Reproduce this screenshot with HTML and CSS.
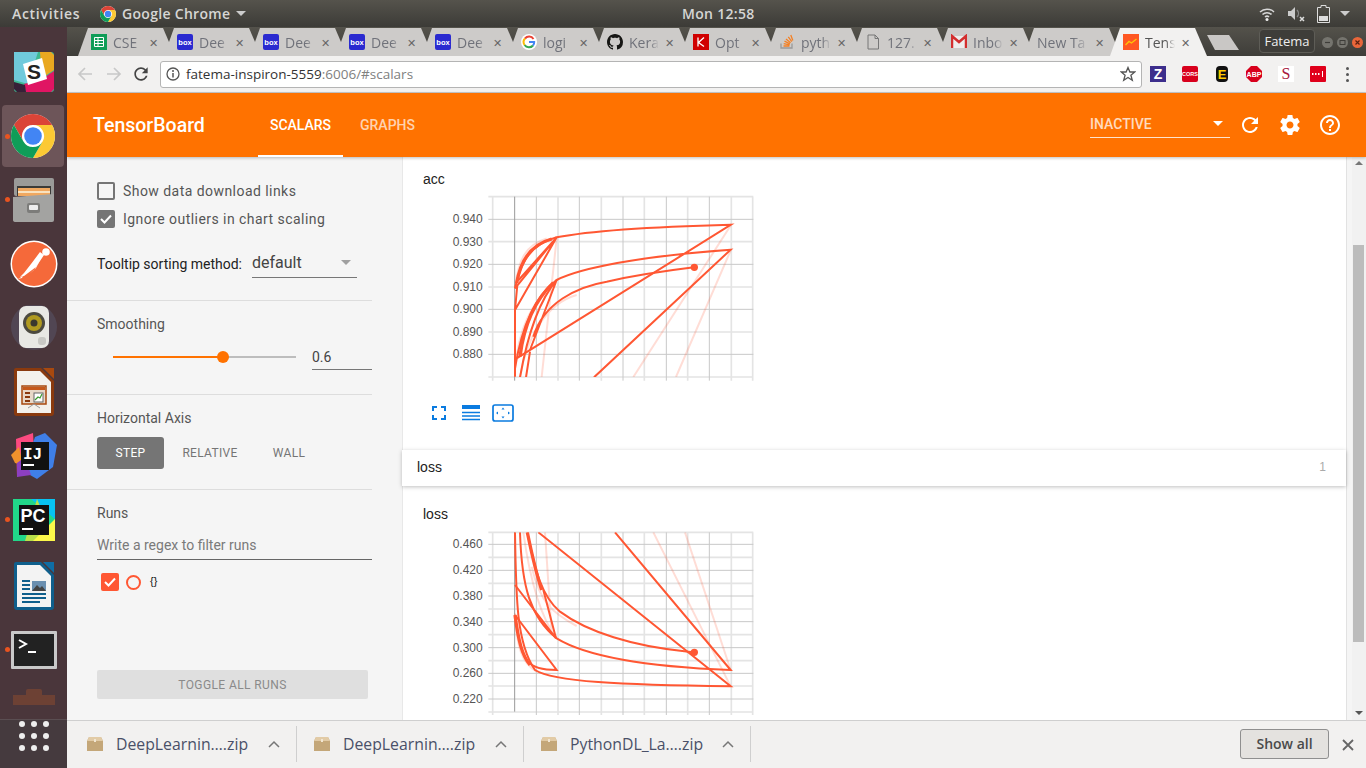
FILE: index.html
```html
<!DOCTYPE html>
<html lang="en">
<head>
    <meta charset="UTF-8">
    <title>TensorBoard</title>
    <link rel="stylesheet" href="styles.css">
</head>
<body>
    <svg class="defs" width="0" height="0">
        <symbol id="chrome" viewBox="4 4 40 40">
            <circle cx="24" cy="24" r="20" fill="#fff"/>
            <path fill="#db4437" d="M6.7 14A20 20 0 0 1 41.3 14H24A10 10 0 0 0 15.3 29Z"/>
            <path fill="#fcc934" d="M41.3 14A20 20 0 0 1 24 44L32.7 29A10 10 0 0 0 24 14Z"/>
            <path fill="#0f9d58" d="M24 44A20 20 0 0 1 6.7 14L15.3 29A10 10 0 0 0 32.7 29Z"/>
            <circle cx="24" cy="24" r="8" fill="#4285f4"/>
        </symbol>
        <symbol id="box" viewBox="0 0 16 16">
            <rect width="16" height="16" rx="2" fill="#2a2ad0"/>
            <text x="8" y="11" text-anchor="middle" font-family="Liberation Sans" font-size="7.5" font-weight="700" fill="#fff">box</text>
        </symbol>
        <symbol id="package" viewBox="0 0 16 14">
            <path fill="#c4a779" d="M2 0H14L16 4V14H0V4Z"/>
            <path fill="#e2cba6" d="M2 0H14L16 4H0Z"/>
            <rect x="7" y="2" width="2" height="3" fill="#f1e6d2"/>
        </symbol>
    </svg>

    <header class="topbar">
        <div class="topbar-left">
            <span class="activities">Activities</span>
            <svg class="top-chrome" width="16" height="16"><use href="#chrome"/></svg>
            <span>Google Chrome</span>
            <i class="caret caret-top"></i>
        </div>
        <div class="clock">Mon 12:58</div>
        <div class="status">
            <svg width="16" height="16" viewBox="0 0 16 16"><path d="M1 6a10 10 0 0 1 14 0M3.5 8.5a6.5 6.5 0 0 1 9 0M6 11a3 3 0 0 1 4 0" fill="none" stroke="#d8d8d8" stroke-width="1.5"/><circle cx="8" cy="13.5" r="1.5" fill="#eee"/></svg>
            <svg width="18" height="16" viewBox="0 0 18 16"><path d="M1 5H4L8 1V14L4 10H1Z" fill="#ccc"/><path d="M10 4a5 5 0 0 1 0 7" fill="none" stroke="#888" stroke-width="1.3"/><path d="M13 11l4 4M17 11l-4 4" stroke="#ddd" stroke-width="1.5"/></svg>
            <svg width="13" height="18" viewBox="0 0 13 18"><path d="M4 .5H9V2.500H12.5V17.500H.5V2.500H4Z" fill="none" stroke="#ddd" stroke-width="1"/><rect x="2" y="11" width="9" height="5" fill="#ddd"/></svg>
            <i class="caret caret-status"></i>
        </div>
    </header>

    <div class="desktop">
        <nav class="dock">
            <div class="dock-item">
                <svg width="40" height="40" viewBox="0 0 40 40">
                    <rect width="40" height="40" rx="3" fill="#3eb991"/>
                    <path d="M0 0H24L14 32 0 28Z" fill="#70cadb"/>
                    <path d="M26 0H37L40 3V18L28 26Z" fill="#e9a820"/>
                    <path d="M40 19V37L37 40H12L10 32 28 27Z" fill="#e01563"/>
                    <path d="M0 30L11 33 12 40H3L0 37Z" fill="#372038"/>
                    <path d="M9 12L28 6 33 27 14 33Z" fill="#fff"/>
                    <text x="20" y="27" text-anchor="middle" font-family="Liberation Sans" font-size="21" font-weight="700" fill="#222">S</text>
                </svg>
            </div>
            <div class="dock-item dock-active">
                <i class="dot"></i>
                <svg width="44" height="44"><use href="#chrome"/></svg>
            </div>
            <div class="dock-item">
                <i class="dot"></i>
                <svg width="42" height="44" viewBox="0 0 42 44">
                    <rect x="1" width="40" height="18" rx="2" fill="#9a9a98"/>
                    <rect x="4" y="8" width="34" height="10" fill="#3a3a38"/>
                    <rect x="5" y="10" width="32" height="8" fill="#f0a860"/>
                    <rect x="5" y="13" width="32" height="2" fill="#f8e2c0"/>
                    <path d="M0 19L41 16V42Q41 44 39 44H3Q0 44 0 42Z" fill="#a3a3a1"/>
                    <rect x="14" y="25" width="13" height="10" rx="2" fill="#7c7c7a"/>
                    <rect x="16" y="27" width="9" height="5" rx="1" fill="#ededed"/>
                </svg>
            </div>
            <div class="dock-item">
                <svg width="48" height="48" viewBox="0 0 48 48">
                    <circle cx="24" cy="24" r="23.500" fill="#fff"/>
                    <circle cx="24" cy="24" r="22" fill="#f5693a"/>
                    <path d="M10 37L14 33 21 24 30 12 34 15 26 27 18 33 14 36Z" fill="#fff"/>
                    <path d="M14 38L24 30 30 20 26 28 19 34Z" fill="#fff"/>
                    <circle cx="36" cy="12" r="3.800" fill="#fff"/>
                    <path d="M8 39L13 36 12 38Z" fill="#fff"/>
                </svg>
            </div>
            <div class="dock-item">
                <svg width="48" height="46" viewBox="0 0 48 46">
                    <circle cx="24" cy="22" r="23" fill="#5a5a70" opacity=".45"/>
                    <rect x="9" y="1" width="30" height="42" rx="7" fill="#e8e8e4"/>
                    <circle cx="24" cy="18" r="11" fill="#4c4a40"/>
                    <circle cx="24" cy="18" r="8" fill="#b09a20"/>
                    <circle cx="24" cy="18" r="3.500" fill="#3a382e"/>
                    <rect x="28" y="32" width="8" height="8" rx="3" fill="#c8c8c4"/>
                </svg>
            </div>
            <div class="dock-item">
                <svg width="40" height="48" viewBox="0 0 40 48">
                    <path d="M2 0H27L40 13V45Q40 48 37 48H3Q0 48 0 45V2Q0 0 2 0Z" fill="#8a3a0e"/>
                    <path d="M3 3H26L37 14V45H3Z" fill="#f3f1ec"/>
                    <path d="M29 0H40V11Z" fill="#a8490f"/>
                    <rect x="8" y="18" width="24" height="18" fill="#e8d8c8" stroke="#a8490f" stroke-width="1.500"/>
                    <rect x="9" y="19" width="22" height="3" fill="#c5581a"/>
                    <path d="M11 25h5M11 29h5M11 33h5" stroke="#8a3a0e" stroke-width="2"/>
                    <rect x="20" y="25" width="9" height="9" fill="#fff" stroke="#666"/>
                    <path d="M21 32l3-3 2 1 2-4" fill="none" stroke="#3a9a30" stroke-width="1.200"/>
                    <path d="M20 36l-6 4M20 36l6 4" stroke="#999"/>
                </svg>
            </div>
            <div class="dock-item">
                <svg width="46" height="46" viewBox="0 0 46 46">
                    <path d="M5 6L22 0 24 30 6 44Z" fill="#fc4a80"/>
                    <path d="M0 22L8 14 12 32 4 30Z" fill="#f0922c"/>
                    <path d="M24 4L34 0 46 12 42 34 26 46 12 38Z" fill="#3f7fe8"/>
                    <path d="M6 30L14 24 20 42 6 44Z" fill="#8d3fc0"/>
                    <rect x="10" y="9" width="28" height="28" fill="#111"/>
                    <text x="12" y="26" font-family="Liberation Mono" font-size="16" font-weight="700" fill="#fff">IJ</text>
                    <rect x="12" y="31" width="11" height="2" fill="#fff"/>
                </svg>
            </div>
            <div class="dock-item">
                <i class="dot"></i>
                <svg width="42" height="42" viewBox="0 0 42 42">
                    <rect width="42" height="42" fill="#21d789"/>
                    <path d="M18 0H42V20Z" fill="#07c3f2"/>
                    <path d="M24 0L30 14 42 42H12Z" fill="#b8e04a"/>
                    <path d="M42 20V42H20Z" fill="#fcf84a"/>
                    <rect x="6" y="6" width="30" height="30" fill="#111"/>
                    <text x="7.500" y="23" font-family="Liberation Sans" font-size="18" font-weight="700" fill="#fff">PC</text>
                    <rect x="9" y="29" width="11" height="2" fill="#fff"/>
                </svg>
            </div>
            <div class="dock-item dock-writer">
                <svg width="40" height="48" viewBox="0 0 40 48">
                    <path d="M2 0H27L40 13V45Q40 48 37 48H3Q0 48 0 45V2Q0 0 2 0Z" fill="#0f5f8c"/>
                    <path d="M3 3H26L37 14V45H3Z" fill="#f3f3f3"/>
                    <path d="M29 0H40V11Z" fill="#0f6ea5"/>
                    <path d="M8 19h8M8 23h8M8 27h8M8 32h24M8 36h24M8 40h18" stroke="#0f5f8c" stroke-width="2"/>
                    <rect x="18" y="19" width="14" height="10" fill="#6a8fb0"/>
                    <path d="M18 29l5-6 3 3 2-2 4 5Z" fill="#444"/>
                </svg>
            </div>
            <div class="dock-item">
                <i class="dot"></i>
                <svg width="46" height="38" viewBox="0 0 46 38">
                    <rect width="46" height="38" rx="1" fill="#c9c9c9"/>
                    <rect x="3" y="3" width="40" height="32" fill="#222"/>
                    <path d="M8 9l7 4-7 4" fill="none" stroke="#fff" stroke-width="2"/>
                    <rect x="17" y="20" width="8" height="2" fill="#fff"/>
                </svg>
            </div>
            <div class="dock-item dock-faded">
                <svg width="42" height="16" viewBox="0 0 42 16">
                    <path d="M0 6H13V2Q13 0 15 0H27Q29 0 29 2V6H42V16H0Z" fill="#8a4a30"/>
                </svg>
            </div>
            <div class="dock-apps">
                <i></i><i></i><i></i><i></i><i></i><i></i><i></i><i></i><i></i>
            </div>
        </nav>

        <div class="browser">
            <div class="tabstrip">
                <div class="tab">
                    <svg width="16" height="16" viewBox="0 0 16 16"><rect width="16" height="16" fill="#0f9d58"/><path d="M3.500 3.500h9v9h-9zM3.500 6.500h9M3.500 9.500h9M7 3.500v9" fill="none" stroke="#fff"/></svg>
                    <span class="tab-title">CSE</span><span class="tab-x">✕</span>
                </div>
                <div class="tab"><svg width="16" height="16"><use href="#box"/></svg><span class="tab-title">Dee</span><span class="tab-x">✕</span></div>
                <div class="tab"><svg width="16" height="16"><use href="#box"/></svg><span class="tab-title">Dee</span><span class="tab-x">✕</span></div>
                <div class="tab"><svg width="16" height="16"><use href="#box"/></svg><span class="tab-title">Dee</span><span class="tab-x">✕</span></div>
                <div class="tab"><svg width="16" height="16"><use href="#box"/></svg><span class="tab-title">Dee</span><span class="tab-x">✕</span></div>
                <div class="tab">
                    <svg width="16" height="16" viewBox="0 0 16 16"><circle cx="8" cy="8" r="8" fill="#fff"/><path d="M12.500 5A5.300 5.300 0 0 0 4 4.500" fill="none" stroke="#ea4335" stroke-width="2"/><path d="M4 4.500A5.300 5.300 0 0 0 3.600 11" fill="none" stroke="#fbbc05" stroke-width="2"/><path d="M3.600 11A5.300 5.300 0 0 0 12 11.500" fill="none" stroke="#34a853" stroke-width="2"/><path d="M8 8H13.200A5.300 5.300 0 0 1 12 11.500" fill="none" stroke="#4285f4" stroke-width="2"/></svg>
                    <span class="tab-title">logi</span><span class="tab-x">✕</span>
                </div>
                <div class="tab">
                    <svg width="16" height="16" viewBox="0 0 16 16"><path fill="#161614" d="M8 0C3.580 0 0 3.580 0 8c0 3.540 2.290 6.530 5.470 7.590.4.070.55-.17.55-.38 0-.19-.01-.82-.01-1.490-2.010.37-2.530-.49-2.690-.94-.09-.23-.48-.94-.82-1.130-.28-.15-.68-.52-.01-.53.63-.01 1.080.58 1.230.82.720 1.210 1.870.87 2.330.66.070-.52.28-.87.510-1.070-1.780-.2-3.640-.89-3.640-3.950 0-.87.310-1.590.820-2.150-.08-.2-.36-1.020.08-2.120 0 0 .67-.21 2.200.82.640-.18 1.320-.27 2-.27s1.360.09 2 .27c1.530-1.040 2.200-.82 2.200-.82.440 1.100.16 1.920.08 2.120.51.560.82 1.270.82 2.150 0 3.070-1.870 3.750-3.650 3.950.29.250.54.730.54 1.480 0 1.070-.01 1.930-.01 2.200 0 .21.150.46.550.38A8.010 8.010 0 0 0 16 8c0-4.420-3.580-8-8-8z"/></svg>
                    <span class="tab-title">Kera</span><span class="tab-x">✕</span>
                </div>
                <div class="tab">
                    <svg width="16" height="16" viewBox="0 0 16 16"><rect width="16" height="16" fill="#d00000"/><path d="M5 3.500v9M11 3.500L5.500 8.500 11 12.500" fill="none" stroke="#fff" stroke-width="1.300"/></svg>
                    <span class="tab-title">Opt</span><span class="tab-x">✕</span>
                </div>
                <div class="tab">
                    <svg width="16" height="16" viewBox="0 0 16 16"><path d="M2 9.500v4.500h11V9.500" fill="none" stroke="#999" stroke-width="1.300"/><path d="M4.500 12h6M4.700 9.700l5.900 1.200M5.500 7.200l5.400 2.600M7 5l4.600 3.800M9.300 2.800l3.500 4.800M11.800 1l2 5.500" stroke="#f48024" stroke-width="1.300"/></svg>
                    <span class="tab-title">pyth</span><span class="tab-x">✕</span>
                </div>
                <div class="tab">
                    <svg width="16" height="16" viewBox="0 0 16 16"><path d="M3 1H10L13.500 4.500V15H3ZM10 1V4.500H13.500" fill="none" stroke="#777"/></svg>
                    <span class="tab-title">127.</span><span class="tab-x">✕</span>
                </div>
                <div class="tab">
                    <svg width="16" height="16" viewBox="0 0 16 16"><rect x="1" y="2" width="14" height="12" fill="#eee"/><path d="M1 14V2L8 8 15 2V14" fill="none" stroke="#d32f2f" stroke-width="2.500"/></svg>
                    <span class="tab-title">Inbo</span><span class="tab-x">✕</span>
                </div>
                <div class="tab"><span class="tab-title tab-title-wide">New Ta</span><span class="tab-x">✕</span></div>
                <div class="tab tab-active">
                    <svg width="16" height="16" viewBox="0 0 16 16"><rect width="16" height="16" fill="#ff5722"/><path d="M2.500 11L6 7.500 8.500 9 13.500 5" fill="none" stroke="#ffc107" stroke-width="1.400"/></svg>
                    <span class="tab-title">Tens</span><span class="tab-x">✕</span>
                </div>
                <div class="new-tab"></div>
                <div class="profile">Fatema</div>
                <div class="win-buttons">
                    <i class="win-btn"><svg width="11" height="11" viewBox="0 0 11 11"><path d="M3 5.500H8" stroke="#3e3d39" stroke-width="1.200"/></svg></i>
                    <i class="win-btn"><svg width="11" height="11" viewBox="0 0 11 11"><rect x="3" y="3.500" width="5" height="4" fill="none" stroke="#3e3d39"/></svg></i>
                    <i class="win-btn win-close"><svg width="11" height="11" viewBox="0 0 11 11"><path d="M3.500 3.500L7.500 7.500M7.500 3.500L3.500 7.500" stroke="#5a2010" stroke-width="1.200"/></svg></i>
                </div>
            </div>

            <div class="toolbar">
                <svg class="nav-icon" width="16" height="16" viewBox="0 0 16 16"><path d="M15 8H2M8 2L2 8 8 14" fill="none" stroke="#c8c8c8" stroke-width="1.700"/></svg>
                <svg class="nav-icon nav-forward" width="16" height="16" viewBox="0 0 16 16"><path d="M1 8H14M8 2L14 8 8 14" fill="none" stroke="#c8c8c8" stroke-width="1.700"/></svg>
                <svg class="nav-icon" width="20" height="20" viewBox="0 0 24 24"><path fill="#444" d="M17.650 6.350C16.200 4.900 14.210 4 12 4c-4.420 0-7.990 3.580-7.990 8s3.570 8 7.990 8c3.730 0 6.840-2.550 7.730-6h-2.080c-.82 2.330-3.040 4-5.650 4-3.310 0-6-2.690-6-6s2.690-6 6-6c1.660 0 3.140.69 4.220 1.780L13 11h7V4l-2.350 2.350z"/></svg>
                <div class="omnibox">
                    <svg width="14" height="14" viewBox="0 0 14 14"><circle cx="7" cy="7" r="6" fill="none" stroke="#555" stroke-width="1.300"/><path d="M7 6v4.500" stroke="#555" stroke-width="1.500"/><circle cx="7" cy="3.900" r="1" fill="#555"/></svg>
                    <span class="url"><b>fatema-inspiron-5559</b>:6006/#scalars</span>
                    <svg class="star" width="16" height="16" viewBox="0 0 16 16"><path d="M8 1.500L9.900 6H14.800L10.900 9.200 12.300 14.300 8 11.500 3.700 14.300 5.100 9.200 1.200 6H6.100Z" fill="none" stroke="#555" stroke-width="1.300"/></svg>
                </div>
                <div class="extensions">
                    <svg width="16" height="16" viewBox="0 0 16 16"><rect width="16" height="16" fill="#3d2e8c"/><text x="8" y="13" text-anchor="middle" font-family="Liberation Sans" font-size="14" font-weight="700" fill="#fff">Z</text></svg>
                    <svg width="16" height="16" viewBox="0 0 16 16"><rect width="16" height="16" rx="2" fill="#d8001c"/><text x="8" y="10" text-anchor="middle" font-family="Liberation Sans" font-size="5.500" font-weight="700" fill="#fff">CORS</text></svg>
                    <svg width="16" height="16" viewBox="0 0 16 16"><rect x="2" y="0" width="12" height="16" rx="4" fill="#111"/><text x="8" y="13" text-anchor="middle" font-family="Liberation Sans" font-size="13" font-weight="700" fill="#fc0">E</text></svg>
                    <svg width="16" height="16" viewBox="0 0 16 16"><path d="M5 0H11L16 5V11L11 16H5L0 11V5Z" fill="#d8001c"/><text x="8" y="10.500" text-anchor="middle" font-family="Liberation Sans" font-size="7" font-weight="700" fill="#fff">ABP</text></svg>
                    <svg width="16" height="16" viewBox="0 0 16 16"><rect width="16" height="16" fill="#fff"/><text x="8" y="13" text-anchor="middle" font-family="Liberation Serif" font-size="16" fill="#a8183c">S</text></svg>
                    <svg width="16" height="16" viewBox="0 0 16 16"><rect width="16" height="16" rx="1" fill="#e0001b"/><path d="M2 8h1.500M5 8h1.500M8 8h1.500" stroke="#fff" stroke-width="2"/><path d="M12.500 5v6" stroke="#fff"/></svg>
                </div>
                <div class="kebab"><i></i><i></i><i></i></div>
            </div>

            <header class="tb-header">
                <div class="tb-logo">TensorBoard</div>
                <div class="tb-tab tb-tab-on">SCALARS</div>
                <div class="tb-tab">GRAPHS</div>
                <div class="tb-run">INACTIVE<i class="caret caret-white"></i></div>
                <svg class="tb-icon tb-refresh" width="24" height="24" viewBox="0 0 24 24"><path d="M17.650 6.350C16.200 4.900 14.210 4 12 4c-4.420 0-7.990 3.580-7.990 8s3.570 8 7.990 8c3.730 0 6.840-2.550 7.730-6h-2.080c-.82 2.330-3.040 4-5.650 4-3.310 0-6-2.690-6-6s2.690-6 6-6c1.660 0 3.140.69 4.220 1.780L13 11h7V4l-2.350 2.350z"/></svg>
                <svg class="tb-icon" width="24" height="24" viewBox="0 0 24 24"><path d="M19.430 12.980c.04-.32.07-.64.07-.98s-.03-.66-.07-.98l2.110-1.650c.19-.15.24-.42.12-.64l-2-3.460c-.12-.22-.39-.3-.61-.22l-2.490 1c-.52-.4-1.080-.73-1.690-.98l-.38-2.650C14.460 2.180 14.250 2 14 2h-4c-.25 0-.46.18-.49.420l-.38 2.650c-.61.25-1.170.59-1.690.98l-2.490-1c-.23-.09-.49 0-.61.22l-2 3.460c-.13.22-.07.49.12.64l2.110 1.650c-.04.32-.07.65-.07.98s.03.66.07.98l-2.110 1.650c-.19.15-.24.42-.12.64l2 3.460c.12.22.39.3.61.22l2.490-1c.52.4 1.080.73 1.690.98l.38 2.650c.03.24.24.42.49.42h4c.25 0 .46-.18.49-.42l.38-2.650c.61-.25 1.170-.59 1.690-.98l2.490 1c.23.09.49 0 .61-.22l2-3.460c.12-.22.07-.49-.12-.64l-2.110-1.650zM12 15.500c-1.930 0-3.500-1.570-3.500-3.500s1.570-3.500 3.500-3.500 3.500 1.570 3.500 3.500-1.570 3.500-3.500 3.500z"/></svg>
                <svg class="tb-icon" width="24" height="24" viewBox="0 0 24 24"><path d="M11 18h2v-2h-2v2zm1-16C6.480 2 2 6.480 2 12s4.480 10 10 10 10-4.480 10-10S17.520 2 12 2zm0 18c-4.410 0-8-3.590-8-8s3.590-8 8-8 8 3.590 8 8-3.590 8-8 8zm0-14c-2.210 0-4 1.790-4 4h2c0-1.100.9-2 2-2s2 .9 2 2c0 2-3 1.750-3 5h2c0-2.250 3-2.500 3-5 0-2.210-1.790-4-4-4z"/></svg>
            </header>

            <div class="page">
                <aside class="sidebar">
                    <section class="side-block side-options">
                        <label class="check"><i class="box"></i>Show data download links</label>
                        <label class="check"><i class="box box-on"><svg width="14" height="14" viewBox="0 0 14 14"><path d="M2 7l3.500 3.500L12 3.500" fill="none" stroke="#fff" stroke-width="2"/></svg></i>Ignore outliers in chart scaling</label>
                        <div class="tooltip-row">
                            <span>Tooltip sorting method:</span>
                            <div class="select">default<i class="caret caret-grey"></i></div>
                        </div>
                    </section>
                    <section class="side-block side-smoothing">
                        <div class="side-title">Smoothing</div>
                        <div class="slider-row">
                            <div class="slider"><div class="slider-fill"></div><div class="slider-knob"></div></div>
                            <div class="slider-value">0.6</div>
                        </div>
                    </section>
                    <section class="side-block side-axis">
                        <div class="side-title">Horizontal Axis</div>
                        <div class="axis-buttons">
                            <div class="axis-btn axis-btn-on">STEP</div>
                            <div class="axis-btn axis-btn-rel">RELATIVE</div>
                            <div class="axis-btn axis-btn-wall">WALL</div>
                        </div>
                    </section>
                    <section class="side-runs">
                        <div class="side-title">Runs</div>
                        <div class="run-filter">Write a regex to filter runs</div>
                        <div class="run-row">
                            <i class="box box-run"><svg width="14" height="14" viewBox="0 0 14 14"><path d="M2 7l3.500 3.500L12 3.500" fill="none" stroke="#fff" stroke-width="2"/></svg></i>
                            <i class="run-dot"></i>
                            <span class="run-name">{}</span>
                        </div>
                        <div class="toggle-runs">TOGGLE ALL RUNS</div>
                    </section>
                </aside>

                <main class="panel">
                    <section class="chart-card chart-card-acc">
                        <div class="chart-title">acc</div>
                        <svg class="chart" width="310" height="190" viewBox="90 75 930 570">
                            <defs><clipPath id="clip-acc"><rect x="205" y="80" width="800" height="541"/></clipPath></defs>
                            <path class="grid-minor" d="M218 80V632M414 80V632M544 80V632M673 80V632M803 80V632M934 80V632M998 80V632M205 80H1000M205 215H1000M205 351H1000M205 486H1000M205 621H1000"/>
                            <path class="grid-major" d="M349 80V632M478 80V632M609 80V632M739 80V632M868 80V632M205 148H1000M205 283H1000M205 418H1000M205 553H1000"/>
                            <path class="grid-axis" d="M284 80V632"/>
                            <g class="axis-label">
                                <text x="188" y="160">0.940</text><text x="188" y="227">0.930</text><text x="188" y="295">0.920</text><text x="188" y="363">0.910</text><text x="188" y="430">0.900</text><text x="188" y="498">0.890</text><text x="188" y="565">0.880</text>
                            </g>
                            <g clip-path="url(#clip-acc)">
                                <path class="raw" d="M365 621L410 205M640 621L933 165M768 621L933 239M285 355C295 270 315 225 380 205M285 600C295 480 330 400 410 330M300 621C320 500 380 400 470 375"/>
                                <path class="smooth" d="M285 355C300 285 325 225 410 202C500 184 700 170 933 164L285 568V595C300 500 335 385 410 330C480 295 650 260 932 239L522 622"/>
                                <path class="smooth" d="M300 622C318 520 350 400 410 330L330 540M340 500C370 400 470 350 560 335C650 315 740 302 822 292"/>
                                <path class="smooth" d="M285 355L410 202L285 420L292 345M285 420V620M296 330L410 202M318 622L330 545"/>
                                <path class="smooth smooth-thick" d="M290 340C300 280 325 225 395 207M300 560C310 480 335 400 400 338"/>
                            </g>
                            <circle class="run-marker" cx="823" cy="292" r="11"/>
                        </svg>
                        <div class="chart-tools">
                            <svg width="14" height="14" viewBox="0 0 14 14"><path d="M1 5V1H5M9 1H13V5M13 9V13H9M5 13H1V9" fill="none" stroke="#0a7be0" stroke-width="2"/></svg>
                            <svg width="18" height="16" viewBox="0 0 18 16"><path d="M0 2H18" stroke="#0a7be0" stroke-width="4"/><path d="M0 7.500H18M0 11H18M0 14.500H18" stroke="#0a7be0" stroke-width="1.700"/></svg>
                            <svg width="22" height="18" viewBox="0 0 22 18"><rect x="1" y="1" width="20" height="16" rx="2" fill="none" stroke="#0a7be0" stroke-width="1.700"/><path d="M11 3.500l-1.500 2h3ZM11 14.500l-1.500-2h3ZM4 9l2-1.500v3ZM18 9l-2-1.500v3Z" fill="#0a7be0"/></svg>
                        </div>
                    </section>

                    <div class="section-head"><span>loss</span><span class="section-count">1</span></div>

                    <section class="chart-card">
                        <div class="chart-title">loss</div>
                        <svg class="chart" width="310" height="185" viewBox="90 90 930 555">
                            <defs><clipPath id="clip-loss"><rect x="205" y="97" width="800" height="538"/></clipPath></defs>
                            <path class="grid-minor" d="M218 97V645M414 97V645M544 97V645M673 97V645M803 97V645M934 97V645M998 97V645M205 97H1000M205 172H1000M205 250H1000M205 327H1000M205 404H1000M205 482H1000M205 558H1000M205 636H1000"/>
                            <path class="grid-major" d="M349 97V645M478 97V645M609 97V645M739 97V645M868 97V645M205 133H1000M205 211H1000M205 288H1000M205 365H1000M205 443H1000M205 520H1000M205 597H1000"/>
                            <path class="grid-axis" d="M284 97V635"/>
                            <g class="axis-label">
                                <text x="188" y="145">0.460</text><text x="188" y="223">0.420</text><text x="188" y="301">0.380</text><text x="188" y="378">0.340</text><text x="188" y="455">0.300</text><text x="188" y="532">0.260</text><text x="188" y="610">0.220</text>
                            </g>
                            <g clip-path="url(#clip-loss)">
                                <path class="raw" d="M932 559L700 97M932 510L795 97M395 400L375 97M285 340C290 440 305 490 350 515M310 97C330 240 360 350 410 415M335 200C360 310 400 340 470 378"/>
                                <path class="smooth" d="M322 97C345 210 365 290 420 335C500 395 640 440 805 455L822 457"/>
                                <path class="smooth" d="M300 97C305 260 330 350 410 415C500 470 680 500 932 510L585 97"/>
                                <path class="smooth" d="M285 97C288 300 290 430 345 510C400 545 600 555 932 559L355 97"/>
                                <path class="smooth" d="M408 415L370 270M408 415L285 255M285 345L410 510C370 510 340 505 325 485"/>
                                <path class="smooth smooth-thick" d="M285 345C295 420 305 465 330 495M322 97C335 160 345 210 365 270"/>
                            </g>
                            <circle class="run-marker" cx="823" cy="457" r="11"/>
                        </svg>
                    </section>
                </main>

                <div class="gutter"></div>
                <div class="scrollbar">
                    <i class="arrow-up"></i>
                    <div class="thumb"></div>
                    <i class="arrow-down"></i>
                </div>
            </div>

            <footer class="downloads">
                <div class="dl-item">
                    <svg width="16" height="14"><use href="#package"/></svg>
                    <span class="dl-name">DeepLearnin….zip</span>
                    <svg class="dl-up" width="12" height="8" viewBox="0 0 12 8"><path d="M1 7l5-5 5 5" fill="none" stroke="#777" stroke-width="1.500"/></svg>
                </div>
                <div class="dl-item">
                    <svg width="16" height="14"><use href="#package"/></svg>
                    <span class="dl-name">DeepLearnin….zip</span>
                    <svg class="dl-up" width="12" height="8" viewBox="0 0 12 8"><path d="M1 7l5-5 5 5" fill="none" stroke="#777" stroke-width="1.500"/></svg>
                </div>
                <div class="dl-item">
                    <svg width="16" height="14"><use href="#package"/></svg>
                    <span class="dl-name">PythonDL_La….zip</span>
                    <svg class="dl-up" width="12" height="8" viewBox="0 0 12 8"><path d="M1 7l5-5 5 5" fill="none" stroke="#777" stroke-width="1.500"/></svg>
                </div>
                <div class="show-all">Show all</div>
                <svg class="dl-close" width="12" height="12" viewBox="0 0 12 12"><path d="M1 1L11 11M11 1L1 11" stroke="#666" stroke-width="1.800"/></svg>
            </footer>
        </div>
    </div>
</body>
</html>
```

FILE: styles.css
```css
* {
    box-sizing: border-box;
}

html, body {
    margin: 0;
    height: 100%;
    overflow: hidden;
}

body {
    font-family: Roboto, sans-serif;
    display: flex;
    flex-direction: column;
    width: 1366px;
    height: 768px;
}

i {
    display: block;
    font-style: normal;
}

.defs {
    position: absolute;
}

.caret {
    width: 0;
    height: 0;
    border-left: 5px solid transparent;
    border-right: 5px solid transparent;
    border-top: 5px solid #ccc;
}

/* gnome top bar */
.topbar {
    height: 27px;
    flex: none;
    display: flex;
    align-items: center;
    background: linear-gradient(#55534c, #3c3b37);
    color: #d6d6d4;
    font-family: "Open Sans", sans-serif;
    font-size: 14px;
    font-weight: 600;
    letter-spacing: .3px;
}

.topbar-left {
    width: 682px;
    display: flex;
    align-items: center;
    padding-left: 12px;
}

.activities {
    width: 88px;
    letter-spacing: .7px;
}

.top-chrome {
    margin-right: 6px;
}

.caret-top {
    margin-left: 6px;
}

.caret-status {
    margin-left: -2px;
}

.status {
    margin-left: auto;
    display: flex;
    align-items: center;
    gap: 12px;
    padding-right: 16px;
}

/* launcher */
.desktop {
    flex: 1;
    display: flex;
    min-height: 0;
}

.dock {
    width: 67px;
    flex: none;
    background: #4a363b;
    padding-top: 13px;
    display: flex;
    flex-direction: column;
    overflow: hidden;
    position: relative;
}

.dock-item {
    height: 64px;
    flex: none;
    display: flex;
    align-items: center;
    justify-content: center;
    position: relative;
}

.dock-active {
    background: #6d5559;
    margin: 1px 3px 1px 2px;
    border-radius: 4px;
    height: 62px;
}

.dock-active .dot {
    left: 3px;
}

.dock-writer {
    margin-top: 2px;
}

.dot {
    position: absolute;
    left: 5px;
    top: 29px;
    width: 5px;
    height: 5px;
    border-radius: 50%;
    background: #e95420;
}

.dock-faded {
    height: 24px;
    margin-top: 3px;
    opacity: .55;
}

.dock-apps {
    position: absolute;
    left: 0;
    right: 0;
    bottom: 0;
    height: 49px;
    background: #453a3e;
    border-top: 1px solid #5a4e52;
    padding-top: 1px;
    display: grid;
    grid-template-columns: repeat(3, 6px);
    gap: 6px;
    align-content: start;
    justify-content: center;
}

.dock-apps i {
    width: 6px;
    height: 6px;
    border-radius: 50%;
    background: #eeeeee;
}

/* chrome */
.browser {
    flex: 1;
    min-width: 0;
    display: flex;
    flex-direction: column;
}

.tabstrip {
    height: 29px;
    flex: none;
    display: flex;
    align-items: flex-end;
    padding-left: 11px;
    background: linear-gradient(#54524b, #3e3d39);
    font-family: "Open Sans", sans-serif;
}

.tab {
    width: 97px;
    height: 28px;
    flex: none;
    margin-right: -11px;
    background: #cdcbc9;
    clip-path: polygon(0 100%, 10px 0, 85px 0, 97px 100%);
    display: flex;
    align-items: center;
    padding-left: 13px;
    font-size: 14px;
    color: #70727a;
}

.tab svg {
    flex: none;
    margin-right: 6px;
}

.tab-title {
    width: 30px;
    flex: none;
    overflow: hidden;
    white-space: nowrap;
    -webkit-mask-image: linear-gradient(90deg, #000 70%, transparent);
    mask-image: linear-gradient(90deg, #000 70%, transparent);
}

.tab-title-wide {
    width: 52px;
}

.tab-x {
    margin-left: 6px;
    font-size: 11px;
    color: #666;
}

.tab-active {
    background: #f2f1f0;
    color: #555;
    position: relative;
    z-index: 2;
}

.new-tab {
    width: 32px;
    height: 15px;
    flex: none;
    margin: 0 0 6px 11px;
    background: #c9c7c5;
    clip-path: polygon(0 0, 22px 0, 32px 100%, 8px 100%);
}

.profile {
    width: 56px;
    height: 24px;
    flex: none;
    margin: 0 0 3px 20px;
    border: 1px solid #5e5d57;
    border-radius: 4px;
    background: #3e3d39;
    color: #eeeeee;
    font-size: 13px;
    display: flex;
    align-items: center;
    justify-content: center;
}

.win-buttons {
    display: flex;
    gap: 4px;
    margin: 0 0 8px 7px;
}

.win-btn {
    width: 11px;
    height: 11px;
    flex: none;
    border-radius: 50%;
    background: #75746e;
}

.win-btn svg {
    display: block;
}

.win-close {
    background: #e9663a;
}

.toolbar {
    height: 37px;
    flex: none;
    display: flex;
    align-items: center;
    background: #f2f1f0;
    border-bottom: 1px solid #c8c8c8;
    padding-left: 10px;
}

.nav-icon {
    margin-right: 13px;
    flex: none;
}

.nav-forward {
    margin-right: 9px;
}

.omnibox {
    width: 982px;
    height: 27px;
    flex: none;
    margin-left: -4px;
    background: #fff;
    border: 1px solid #b4b4b4;
    border-radius: 3px;
    display: flex;
    align-items: center;
    padding: 0 5px;
}

.url {
    margin: -1px 0 0 6px;
    font-family: "Open Sans", sans-serif;
    font-size: 13.500px;
    color: #808080;
}

.url b {
    font-weight: 400;
    color: #333;
}

.star {
    margin: 0 0 0 auto;
}

.extensions {
    display: flex;
    gap: 16px;
    margin-left: 8px;
}

.extensions svg {
    width: 16px;
}

.kebab {
    margin-left: 20px;
    display: flex;
    flex-direction: column;
    gap: 3px;
}

.kebab i {
    width: 3px;
    height: 3px;
    background: #555;
    border-radius: 50%;
}

/* tensorboard header */
.tb-header {
    height: 64px;
    flex: none;
    background: #ff7200;
    color: #fff;
    display: flex;
    align-items: center;
    padding-left: 26px;
    position: relative;
    z-index: 3;
    box-shadow: 0 1px 3px rgba(0, 0, 0, .25);
}

.tb-logo {
    font-size: 19.500px;
    font-weight: 500;
    width: 165px;
}

.tb-tab {
    width: 85px;
    height: 64px;
    display: flex;
    align-items: center;
    justify-content: center;
    font-size: 14px;
    font-weight: 500;
    color: rgba(255, 255, 255, .7);
    margin-right: 3px;
}

.tb-tab-on {
    color: #fff;
    border-bottom: 2px solid #fff;
    padding-top: 1px;
    margin-right: 2px;
}

.tb-run {
    width: 140px;
    height: 26px;
    margin-left: auto;
    border-bottom: 1px solid rgba(255, 255, 255, .8);
    display: flex;
    align-items: center;
    justify-content: space-between;
    padding: 0 7px 2px 0;
    font-size: 14px;
    font-weight: 500;
    color: rgba(255, 255, 255, .75);
}

.caret-white {
    border-top-color: #fff;
}

.tb-icon {
    fill: #fff;
    margin-left: 16px;
    margin-right: 0;
}

.tb-icon:last-child {
    margin-right: 24px;
}

.tb-refresh {
    margin-left: 8px;
}

/* sidebar */
.page {
    flex: 1;
    min-height: 0;
    display: flex;
    overflow: hidden;
    background: #fff;
}

.sidebar {
    width: 336px;
    flex: none;
    background: #f5f5f5;
    padding-left: 30px;
    font-size: 14px;
    color: #555;
    border-right: 1px solid #e8e8e8;
}

.side-block {
    width: 305px;
    margin-left: -30px;
    padding-left: 30px;
    border-bottom: 1px solid #ddd;
}

.side-options {
    height: 144px;
    padding-top: 25px;
}

.side-smoothing {
    height: 94px;
    padding-top: 15px;
}

.side-axis {
    height: 95px;
    padding-top: 15px;
}

.side-title {
    line-height: 17px;
}

.check {
    display: flex;
    align-items: center;
    gap: 8px;
    height: 18px;
    margin-bottom: 10px;
    letter-spacing: .45px;
}

.box {
    width: 18px;
    height: 18px;
    border: 2px solid #757575;
    border-radius: 2px;
    flex: none;
}

.box svg {
    display: block;
    margin: 0;
}

.box-on {
    background: #757575;
}

.tooltip-row {
    display: flex;
    align-items: flex-start;
    color: #222;
    margin-top: 24px;
}

.tooltip-row span {
    width: 155px;
    padding-top: 4px;
    line-height: 17px;
}

.select {
    width: 105px;
    height: 26px;
    border-bottom: 1px solid #777;
    font-size: 16px;
    color: #444;
    display: flex;
    align-items: flex-start;
    justify-content: space-between;
    padding: 1px 6px 0 0;
    line-height: 19px;
}

.caret-grey {
    border-top-color: #a0a0a0;
    margin-top: 7px;
}

.slider-row {
    display: flex;
    margin-top: 15px;
}

.slider {
    width: 183px;
    height: 12px;
    margin: 3px 16px 0 16px;
    position: relative;
    flex: none;
    background: linear-gradient(#bdbdbd, #bdbdbd) center / 100% 2px no-repeat;
}

.slider-fill {
    width: 110px;
    height: 2px;
    margin-top: 5px;
    background: #ff7200;
}

.slider-knob {
    position: absolute;
    left: 104px;
    top: 0;
    width: 12px;
    height: 12px;
    border-radius: 50%;
    background: #ff7200;
}

.slider-value {
    width: 60px;
    height: 22px;
    border-bottom: 1px solid #777;
    line-height: 18px;
    color: #444;
}

.axis-buttons {
    display: flex;
    margin-top: 10px;
    font-size: 12px;
    letter-spacing: .3px;
}

.axis-btn {
    height: 32px;
    display: flex;
    align-items: center;
    justify-content: center;
    color: #757575;
}

.axis-btn-on {
    width: 67px;
    background: #757575;
    color: #fff;
    border-radius: 3px;
}

.axis-btn-rel {
    width: 92px;
}

.axis-btn-wall {
    width: 66px;
}

.side-runs {
    padding-top: 15px;
}

.run-filter {
    width: 275px;
    height: 28px;
    margin-top: 10px;
    border-bottom: 1px solid #666;
    color: #7a7a7a;
    line-height: 26px;
}

.run-row {
    display: flex;
    align-items: center;
    height: 18px;
    margin: 13px 0 0 4px;
}

.box-run {
    background: #ff5733;
    border-color: #ff5733;
}

.run-dot {
    width: 15px;
    height: 15px;
    border: 2px solid #ff5733;
    border-radius: 50%;
    margin-left: 7px;
}

.run-name {
    margin: -3px 0 0 9px;
    font-family: "Liberation Sans", sans-serif;
    font-size: 11px;
    color: #111;
}

.toggle-runs {
    width: 271px;
    height: 29px;
    margin-top: 79px;
    background: #dfdfdf;
    border-radius: 2px;
    color: #8a8a8a;
    font-size: 12px;
    letter-spacing: .4px;
    display: flex;
    align-items: center;
    justify-content: center;
}

/* charts */
.panel {
    width: 943px;
    flex: none;
    background: #fff;
}

.chart-card {
    height: 293px;
    padding: 15px 0 0 20px;
}

.chart-title {
    font-family: "Liberation Sans", sans-serif;
    font-size: 14px;
    line-height: 15px;
    color: #222;
    margin-bottom: 8px;
}

.chart {
    display: block;
    margin-left: 27px;
}

.chart-tools {
    display: flex;
    align-items: center;
    gap: 16px;
    margin: 18px 0 0 9px;
    height: 20px;
}

.chart-tools svg:last-child {
    margin-left: -4px;
}

.grid-major {
    fill: none;
    stroke: #c8c8c8;
    stroke-width: 3;
}

.grid-minor {
    fill: none;
    stroke: #e4e4e4;
    stroke-width: 5;
}

.grid-axis {
    fill: none;
    stroke: #999;
    stroke-width: 3;
}

.axis-label text {
    font-family: "Liberation Sans", sans-serif;
    font-size: 36px;
    fill: #555;
    text-anchor: end;
}

.smooth {
    fill: none;
    stroke: #ff5733;
    stroke-width: 6;
}

.smooth-thick {
    stroke-width: 10;
}

.raw {
    fill: none;
    stroke: #ff5733;
    stroke-opacity: .2;
    stroke-width: 6;
}

.run-marker {
    fill: #ff5733;
}

.section-head {
    height: 36px;
    margin-left: -1px;
    padding: 0 20px 2px 15px;
    display: flex;
    align-items: center;
    justify-content: space-between;
    font-family: "Liberation Sans", sans-serif;
    font-size: 14px;
    color: #222;
    background: #fff;
    box-shadow: 0 1px 4px rgba(0, 0, 0, .25);
    position: relative;
}

.section-count {
    font-size: 12px;
    color: #aaa;
}

.section-head + .chart-card {
    padding-top: 21px;
}

.section-head + .chart-card .chart-title {
    margin-bottom: 8px;
}

/* scrollbar */
.gutter {
    width: 6px;
    flex: none;
    border-left: 1px solid #e2e2e2;
    background: #f5f5f5;
}

.scrollbar {
    flex: 1;
    background: #f1f1f1;
    position: relative;
}

.thumb {
    position: absolute;
    top: 88px;
    left: 1px;
    width: 11px;
    height: 397px;
    background: #bcbcbc;
}

.arrow-up, .arrow-down {
    position: absolute;
    left: 3px;
    width: 0;
    height: 0;
    border-left: 4px solid transparent;
    border-right: 4px solid transparent;
}

.arrow-up {
    top: 4px;
    border-bottom: 4px solid #777;
}

.arrow-down {
    bottom: 5px;
    border-top: 4px solid #555;
}

/* download shelf */
.downloads {
    height: 48px;
    flex: none;
    background: #f2f1f0;
    border-top: 1px solid #cfcfcf;
    display: flex;
    align-items: center;
    font-family: "Open Sans", sans-serif;
    position: relative;
    z-index: 2;
}

.dl-item {
    width: 227px;
    height: 36px;
    margin-top: -1px;
    display: flex;
    align-items: center;
    padding-left: 17px;
    border-right: 1px solid #cfcfcf;
    flex: none;
}

.dl-item:first-of-type {
    width: 230px;
    padding-left: 20px;
}

.dl-name {
    width: 132px;
    margin-left: 13px;
    white-space: nowrap;
    font-size: 15.800px;
    color: #4a5068;
}

.dl-up {
    margin-left: 20px;
}

.show-all {
    width: 89px;
    height: 30px;
    margin: -2px 0 0 auto;
    background: #e4e2df;
    border: 1px solid #8f8f8f;
    border-radius: 3px;
    color: #4a4a4a;
    font-size: 14px;
    font-weight: 600;
    display: flex;
    align-items: center;
    justify-content: center;
}

.dl-close {
    margin: 0 12px 0 13px;
}
```
